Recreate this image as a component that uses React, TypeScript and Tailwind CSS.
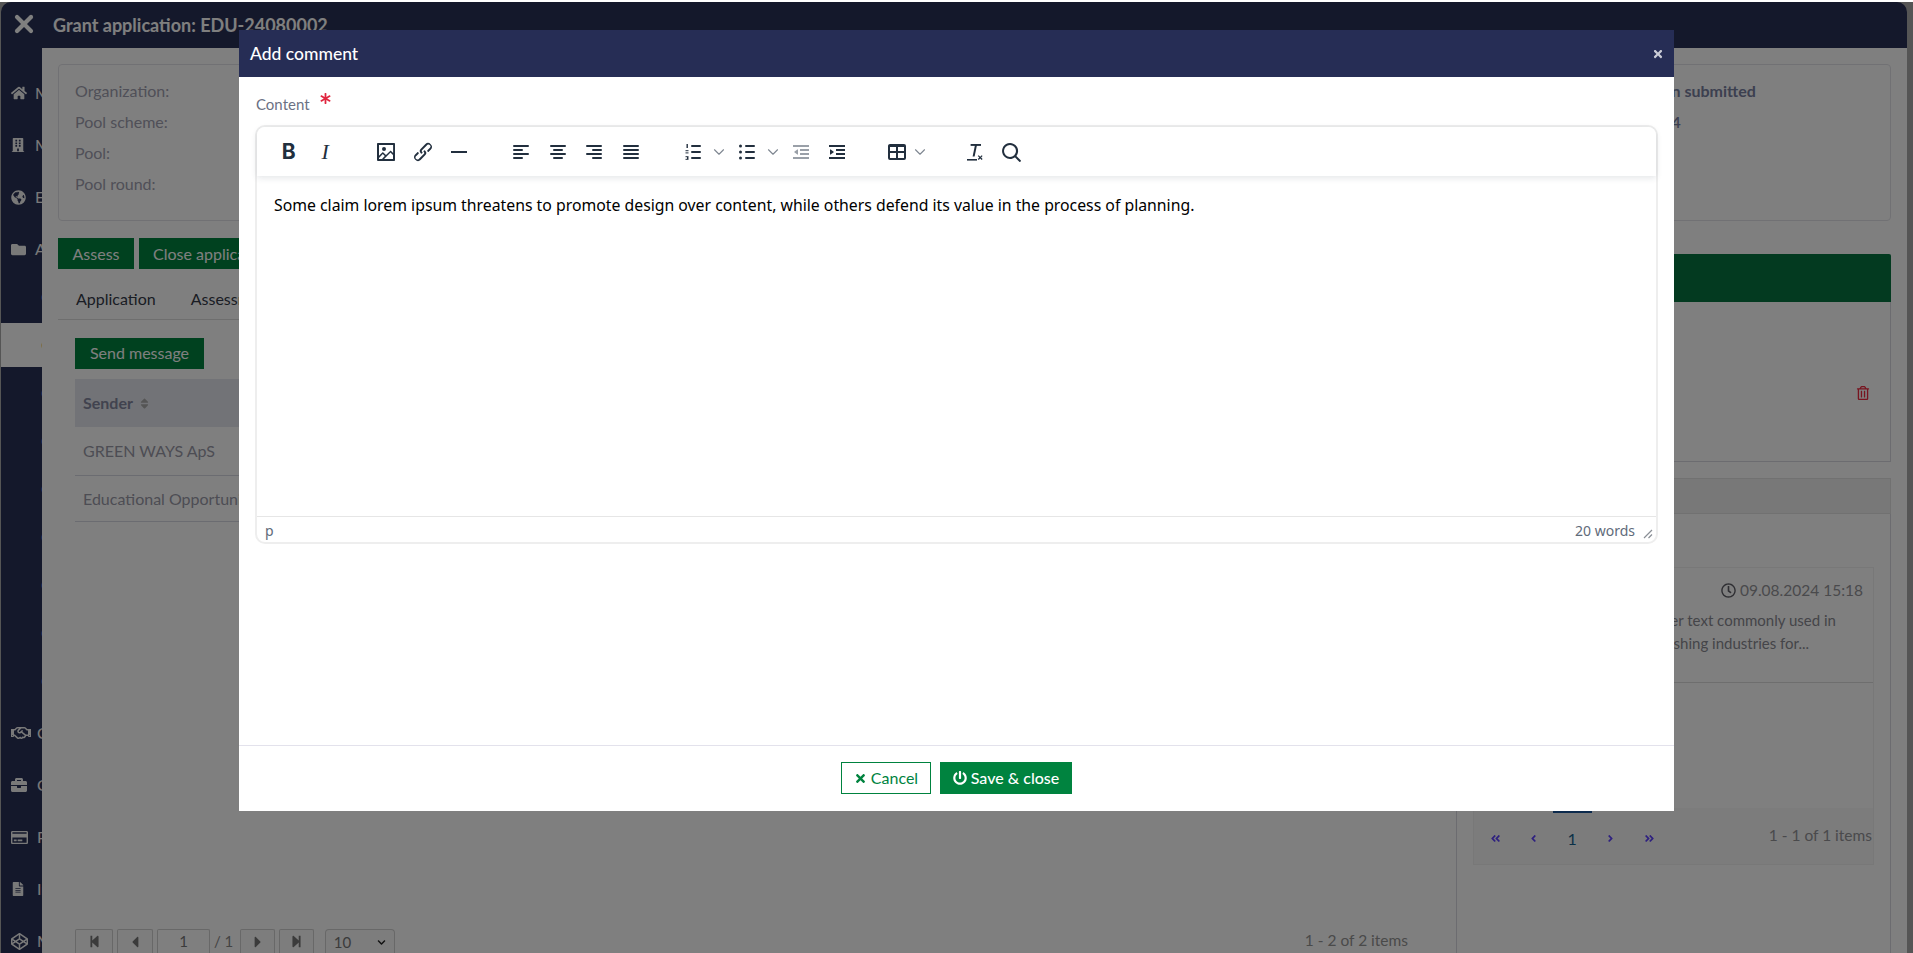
import type { ReactNode } from 'react';
import { ChevronDown, X } from 'lucide-react';
import {
  FaAngleDoubleLeft,
  FaAngleDoubleRight,
  FaAngleLeft,
  FaAngleRight,
  FaAsterisk,
  FaBriefcase,
  FaBuilding,
  FaChevronDown,
  FaCodepen,
  FaFileAlt,
  FaFolder,
  FaGlobeAmericas,
  FaHome,
  FaPowerOff,
  FaRegClock,
  FaRegCreditCard,
  FaRegHandshake,
  FaRegTrashAlt,
  FaSort,
  FaStepBackward,
  FaStepForward,
  FaTimes,
  FaCaretLeft,
  FaCaretRight,
} from 'react-icons/fa';

const font = "font-['Lato','Open_Sans',sans-serif]";

const topItems = [
  { icon: <FaHome size={16} />, label: 'My page' },
  { icon: <FaBuilding size={14} />, label: 'My organization' },
  { icon: <FaGlobeAmericas size={15} />, label: 'Explore' },
  { icon: <FaFolder size={15} />, label: 'Applications' },
];

const subItems = ['Calls', 'Grant applications', 'Contracts', 'Cases', 'Claims', 'Certificates', 'Changes', 'Comments', 'Closures'];

const bottomItems = [
  { icon: <FaRegHandshake size={20} />, label: 'Contacts' },
  { icon: <FaBriefcase size={16} />, label: 'Organizations' },
  { icon: <FaRegCreditCard size={17} />, label: 'Payments' },
  { icon: <FaFileAlt size={14} />, label: 'Invoices' },
  { icon: <FaCodepen size={17} />, label: 'Modules' },
];

function Sidebar() {
  return (
    <aside className="w-[41px] shrink-0 overflow-hidden pt-[19px]">
      {topItems.map((item) => (
        <div key={item.label} className="flex h-[52px] items-center whitespace-nowrap pl-[10px] text-[16px] text-[#f2f2f2]">
          <span className="w-[24px] shrink-0">{item.icon}</span>
          {item.label}
        </div>
      ))}
      <div className="-mt-[2px]">
        {subItems.map((label) => (
          <div key={label} className="h-[48px] py-[2px]">
            <div
              className={`flex h-[44px] items-center whitespace-nowrap pl-[40px] text-[16px] ${
                label === 'Grant applications' ? 'bg-white text-[#d08a5a]' : 'text-[#7d9ed8]'
              }`}
            >
              {label}
            </div>
          </div>
        ))}
      </div>
      <div className="mt-[2px]">
        {bottomItems.map((item) => (
          <div key={item.label} className="flex h-[52px] items-center whitespace-nowrap pl-[10px] text-[16px] text-[#f2f2f2]">
            <span className="w-[26px] shrink-0">{item.icon}</span>
            {item.label}
          </div>
        ))}
      </div>
    </aside>
  );
}

function GreenButton({ children, className = '' }: { children: ReactNode; className?: string }) {
  return <button className={`h-[31px] whitespace-nowrap bg-[#00833f] text-[16px] text-white ${className}`}>{children}</button>;
}

function PagerButton({ children, className = '' }: { children: ReactNode; className?: string }) {
  return (
    <span className={`flex h-[24px] items-center justify-center rounded-t-[2px] border border-b-0 border-[#d0d0d0] bg-[#fafafa] text-[#777] ${className}`}>
      {children}
    </span>
  );
}

function ApplicationColumn() {
  return (
    <div className="flex min-w-0 flex-1 flex-col">
      <div className="mt-[17px] flex gap-[5px]">
        <GreenButton className="w-[76px]">Assess</GreenButton>
        <GreenButton className="px-[14px]">Close application</GreenButton>
      </div>
      <div className="mt-[15px] flex h-[36px] items-start gap-[35px] border-b border-[#ddd] pl-[18px] text-[16px] text-[#353a48]">
        <span className="pt-[3px]">Application</span>
        <span className="pt-[3px]">Assessment</span>
      </div>
      <div className="flex flex-1 flex-col pl-[17px]">
        <GreenButton className="mt-[18px] w-[129px] pb-[2px]">Send message</GreenButton>
        <div className="mt-[10px] flex h-[48px] items-center gap-[5px] bg-[#e5e7ee] pl-[8px] text-[16px] font-bold text-[#82869e]">
          Sender <FaSort size={13} className="text-[#aaa]" />
        </div>
        <div className="flex h-[49px] items-center border-b border-[#d6d9e2] pl-[8px] text-[16px] text-[#9a9aa8]">GREEN WAYS ApS</div>
        <div className="flex h-[46px] items-center border-b border-[#d6d9e2] pl-[8px] text-[16px] text-[#9a9aa8]">Educational Opportunities Ltd</div>
        <div className="mt-auto flex items-end justify-between pr-[32px]">
          <div className="flex items-end gap-[4px]">
            <PagerButton className="w-[38px]"><FaStepBackward size={13} /></PagerButton>
            <PagerButton className="w-[36px]"><FaCaretLeft size={18} /></PagerButton>
            <PagerButton className="w-[53px] bg-white text-[15px]">1</PagerButton>
            <span className="flex h-[24px] w-[22px] items-center text-[15px] text-[#888]">/ 1</span>
            <PagerButton className="w-[35px]"><FaCaretRight size={18} /></PagerButton>
            <PagerButton className="w-[35px]"><FaStepForward size={13} /></PagerButton>
            <PagerButton className="ml-[7px] w-[70px] gap-[26px] rounded-t-[4px] pt-[2px] text-[15px]">
              10 <FaChevronDown size={9} className="text-[#222]" />
            </PagerButton>
          </div>
          <span className="h-[24px] text-[15.5px] text-[#949494]">1 - 2 of 2 items</span>
        </div>
      </div>
    </div>
  );
}

function PageLink({ children, active }: { children: ReactNode; active?: boolean }) {
  return (
    <span
      className={`flex h-[56px] w-[38.5px] items-center justify-center border-t-[5px] ${
        active ? 'border-[#18549a] text-[16px] text-[#14618f]' : 'border-transparent text-[#5c40ff]'
      }`}
    >
      {children}
    </span>
  );
}

function SidePanel() {
  return (
    <div className="flex w-[435px] shrink-0 flex-col">
      <div className="mt-[33px] h-[208px] rounded-t-[2px] border-x border-b border-[#d8d8e0]">
        <div className="-mx-px h-[48px] rounded-t-[2px] bg-[#067540]" />
        <div className="flex justify-end pr-[20px] pt-[84px] text-[#f0283f]">
          <FaRegTrashAlt size={14} />
        </div>
      </div>
      <div className="mt-[16px] flex flex-1 flex-col border-x border-[#d8d8e0]">
        <div className="-mx-px h-[36px] border border-[#e2e2e2] bg-[#f0f0f0]" />
        <div className="mx-[16px] mt-[53px] flex flex-col border border-[#f0f0f0]">
          <div className="h-[115px] border-b border-[#ddd] pl-[20px] pr-[10px]">
            <div className="mt-[11px] flex items-center justify-end gap-[4px] text-[15.5px] text-[#949499]">
              <FaRegClock size={15} className="text-[#5e5e66]" /> 09.08.2024 15:18
            </div>
            <p className="mt-[7px] whitespace-nowrap text-[15px] leading-[23px] text-[#8a8a92]">
              Lorem ipsum is a placeholder text commonly used in
              <br />
              the graphic, print, and publishing industries for...
            </p>
          </div>
          <div className="h-[125px]" />
          <div className="flex h-[56px] items-center justify-between bg-[#f8f8f8] pl-[2px] text-[15.5px] text-[#949499]">
            <div className="flex items-center">
              <PageLink><FaAngleDoubleLeft size={11} /></PageLink>
              <PageLink><FaAngleLeft size={11} /></PageLink>
              <PageLink active>1</PageLink>
              <PageLink><FaAngleRight size={11} /></PageLink>
              <PageLink><FaAngleDoubleRight size={11} /></PageLink>
            </div>
            <span className="whitespace-nowrap pr-px">1 - 1 of 1 items</span>
          </div>
        </div>
      </div>
    </div>
  );
}

function IconSvg({ children, size = 24 }: { children: ReactNode; size?: number }) {
  return (
    <svg width={size} height={size} viewBox="0 0 24 24" fill="currentColor">
      {children}
    </svg>
  );
}

function Lines({ rows }: { rows: [number, number][] }) {
  return (
    <>
      {rows.map(([x, w], i) => (
        <rect key={i} x={x} y={5 + i * 4} width={w} height="2" rx="1" />
      ))}
    </>
  );
}

const icons = {
  image: (
    <IconSvg>
      <path d="M5 15.7l3.3-3.2c.3-.3.7-.3 1 0L12 15l4.1-4c.3-.4.8-.4 1 0l2 1.9V5H5v10.7zM5 18V19h3l2.8-2.9-2-2L5 17.9zm14-3l-2.5-2.4-6.4 6.5H19v-4zM4 3h16c.6 0 1 .4 1 1v16c0 .6-.4 1-1 1H4a1 1 0 0 1-1-1V4c0-.6.4-1 1-1zm6 8a2 2 0 1 0 0-4 2 2 0 0 0 0 4z" />
    </IconSvg>
  ),
  link: (
    <IconSvg>
      <path d="M6.2 12.3a1 1 0 0 1 1.4 1.4l-2 2a2 2 0 1 0 2.6 2.8l4.8-4.8a1 1 0 0 0 0-1.4 1 1 0 1 1 1.4-1.3 2.9 2.9 0 0 1 0 4L9.6 20a3.9 3.9 0 0 1-5.5-5.5l2-2zm11.6-.6a1 1 0 0 1-1.4-1.4l2-2a2 2 0 1 0-2.6-2.8L11 10.3a1 1 0 0 0 0 1.4A1 1 0 1 1 9.6 13a2.9 2.9 0 0 1 0-4L14.4 4a3.9 3.9 0 0 1 5.5 5.5l-2 2z" />
    </IconSvg>
  ),
  hr: (
    <IconSvg>
      <rect x="4" y="11" width="16" height="2" />
    </IconSvg>
  ),
  left: <IconSvg><Lines rows={[[4, 16], [4, 10], [4, 16], [4, 10]]} /></IconSvg>,
  center: <IconSvg><Lines rows={[[4, 16], [7, 10], [4, 16], [7, 10]]} /></IconSvg>,
  right: <IconSvg><Lines rows={[[4, 16], [10, 10], [4, 16], [10, 10]]} /></IconSvg>,
  justify: <IconSvg><Lines rows={[[4, 16], [4, 16], [4, 16], [4, 16]]} /></IconSvg>,
  numlist: (
    <IconSvg>
      <rect x="10" y="5" width="10" height="2" rx="1" />
      <rect x="10" y="11" width="10" height="2" rx="1" />
      <rect x="10" y="17" width="10" height="2" rx="1" />
      <rect x="5.5" y="4" width="1.4" height="4" />
      <rect x="4.5" y="10.2" width="3" height="1" />
      <rect x="4.5" y="12.4" width="3" height="1" />
      <rect x="4.5" y="16.2" width="3" height="1" />
      <rect x="4.5" y="18.8" width="3" height="1" />
      <rect x="6" y="17" width="1.4" height="2" />
    </IconSvg>
  ),
  bullist: (
    <IconSvg>
      <rect x="10" y="5" width="10" height="2" rx="1" />
      <rect x="10" y="11" width="10" height="2" rx="1" />
      <rect x="10" y="17" width="10" height="2" rx="1" />
      <circle cx="5.5" cy="6" r="1.5" />
      <circle cx="5.5" cy="12" r="1.5" />
      <circle cx="5.5" cy="18" r="1.5" />
    </IconSvg>
  ),
  outdent: (
    <IconSvg>
      <rect x="4" y="5" width="16" height="2" />
      <rect x="11" y="9" width="9" height="2" />
      <rect x="11" y="13" width="9" height="2" />
      <rect x="4" y="17" width="16" height="2" />
      <path d="M9 9.2v5.6l-1-.6L5 12l3-2.2z" />
    </IconSvg>
  ),
  indent: (
    <IconSvg>
      <rect x="4" y="5" width="16" height="2" />
      <rect x="11" y="9" width="9" height="2" />
      <rect x="11" y="13" width="9" height="2" />
      <rect x="4" y="17" width="16" height="2" />
      <path d="M5 9.2v5.6l1-.6 3-2.2-3-2.2z" />
    </IconSvg>
  ),
  table: (
    <IconSvg>
      <path d="M5 4h14a2 2 0 0 1 2 2v12a2 2 0 0 1-2 2H5a2 2 0 0 1-2-2V6c0-1.1.9-2 2-2zm0 3v4h6V7H5zm8 0v4h6V7h-6zm-8 6v5h6v-5H5zm8 0v5h6v-5h-6z" />
    </IconSvg>
  ),
  clear: (
    <IconSvg>
      <rect x="7.6" y="4" width="10.4" height="1.9" />
      <path d="M12 5h2l-2.4 11.5h-2z" />
      <rect x="4" y="19" width="10" height="1.6" />
      <path d="M15.7 15.2l1.5 1.5 1.5-1.5.9.9-1.5 1.5 1.5 1.5-.9.9-1.5-1.5-1.5 1.5-.9-.9 1.5-1.5-1.5-1.5z" />
    </IconSvg>
  ),
  search: (
    <IconSvg>
      <path d="M16 17.3a8 8 0 1 1 1.4-1.4l4.3 4.4a1 1 0 0 1-1.4 1.4l-4.4-4.4zM11 17a6 6 0 1 0 0-12 6 6 0 0 0 0 12z" />
    </IconSvg>
  ),
};

function Tool({ children, muted }: { children: ReactNode; muted?: boolean }) {
  return <span className={`flex h-[34px] w-[36.5px] items-center justify-center ${muted ? 'text-[#9aa0a8]' : 'text-[#222f3e]'}`}>{children}</span>;
}

function Chevron() {
  return <ChevronDown size={18} strokeWidth={1.5} className="text-[#7f8791]" />;
}

function Toolbar() {
  return (
    <div className="relative flex h-[49px] shrink-0 items-center rounded-t-[8px] bg-white pl-[13.5px] shadow-[0_2px_6px_rgba(34,47,62,0.12)]">
      <Tool><span className="font-['Inter',sans-serif] text-[21px] font-bold leading-none">B</span></Tool>
      <Tool><span className="font-['Liberation_Serif',serif] text-[22px] italic leading-none">I</span></Tool>
      <span className="w-[24.5px]" />
      <Tool>{icons.image}</Tool>
      <Tool>{icons.link}</Tool>
      <Tool>{icons.hr}</Tool>
      <span className="w-[25.5px]" />
      <Tool>{icons.left}</Tool>
      <Tool>{icons.center}</Tool>
      <Tool>{icons.right}</Tool>
      <Tool>{icons.justify}</Tool>
      <span className="w-[25.5px]" />
      <Tool>{icons.numlist}</Tool>
      <span className="-ml-[1px] w-[18.5px]"><Chevron /></span>
      <Tool>{icons.bullist}</Tool>
      <span className="-ml-[1px] w-[18.5px]"><Chevron /></span>
      <Tool muted>{icons.outdent}</Tool>
      <Tool>{icons.indent}</Tool>
      <span className="w-[23.5px]" />
      <Tool>{icons.table}</Tool>
      <span className="-ml-[5px] w-[46px]"><Chevron /></span>
      <Tool>{icons.clear}</Tool>
      <Tool>{icons.search}</Tool>
    </div>
  );
}

function CommentModal() {
  return (
    <div className={`absolute left-[239px] top-[28px] z-20 flex h-[781px] w-[1435px] flex-col bg-white ${font}`}>
      <header className="flex h-[47px] shrink-0 items-center justify-between bg-[#262d55] pl-[11px] pr-[10px] pt-px text-white">
        <span className="text-[17.5px] font-medium">Add comment</span>
        <FaTimes size={12} className="text-[#c9cbd6]" />
      </header>
      <div className="flex-1 px-[16px]">
        <label className="flex h-[48px] items-start pl-px pt-[17px] text-[15px] leading-[20px] text-[#6b7184]">
          Content
          <FaAsterisk size={11} className="ml-[10px] mt-[-1px] text-[#e0263f]" />
        </label>
        <div className="flex h-[419px] flex-col rounded-[10px] border-2 border-[#eeeeee]">
          <Toolbar />
          <div className="flex-1 pl-[17px] pr-[16px] pt-[17px] font-['Noto_Sans','Open_Sans',sans-serif] text-[15.8px] leading-[24px] text-black">
            Some claim lorem ipsum threatens to promote design over content, while others defend its value in the process of planning.
          </div>
          <div className="relative flex h-[26px] items-center justify-between border-t border-[#e6e6e6] pl-[8px] pr-[21px] pt-[2px] font-['Noto_Sans','Open_Sans',sans-serif] text-[14px] text-[#5f6b7a]">
            <span>p</span>
            <span>20 words</span>
            <svg width="10" height="10" viewBox="0 0 10 10" className="absolute bottom-[3px] right-[3px] text-[#8a8f96]" stroke="currentColor" strokeWidth="1.2">
              <path d="M1 9 9 1M5.5 9 9 5.5" />
            </svg>
          </div>
        </div>
      </div>
      <footer className="flex h-[66px] shrink-0 items-center justify-center gap-[9px] border-t border-[#e3e2ec] pb-[1px]">
        <button className="flex h-[32px] w-[90px] items-center justify-center gap-[4px] border border-[#00833f] text-[16px] text-[#00833f]">
          <FaTimes size={13} /> Cancel
        </button>
        <button className="flex h-[32px] w-[132px] items-center justify-center gap-[4px] bg-[#00833f] text-[16px] font-medium text-white">
          <FaPowerOff size={14} /> Save &amp; close
        </button>
      </footer>
    </div>
  );
}

export default function App() {
  return (
    <div className={`relative h-[953px] w-[1913px] overflow-hidden border-t-2 border-white bg-[#aaaaaa] pl-px pr-[6px] ${font}`}>
      <div className="flex h-full flex-col overflow-hidden rounded-t-[10px] bg-[#283056]">
        <div className="flex h-[46px] shrink-0 items-center pl-[9px] text-white">
          <X size={28} strokeWidth={3.6} className="-mt-[2px]" />
          <h1 className="ml-[15px] text-[18px] font-bold">Grant application: EDU-24080002</h1>
        </div>
        <div className="flex min-h-0 flex-1">
          <Sidebar />
          <main className="flex min-w-0 flex-1 flex-col bg-white px-[16px] pt-[16px]">
            <section className="flex h-[157px] shrink-0 justify-between rounded-[4px] border border-[#e2e2e8] pl-[16px] pt-[15px] text-[16px] text-[#a0a0b0]">
              <div className="space-y-[10px] leading-[21px]">
                <p>Organization:</p>
                <p>Pool scheme:</p>
                <p>Pool:</p>
                <p>Pool round:</p>
              </div>
              <div className="w-[291px] space-y-[10px] leading-[21px]">
                <p className="font-bold text-[#78809f]">Application submitted</p>
                <p className="font-semibold text-[#78809f]">09.08.2024</p>
              </div>
            </section>
            <div className="flex min-h-0 flex-1 gap-[16px]">
              <ApplicationColumn />
              <SidePanel />
            </div>
          </main>
        </div>
      </div>
      <div className="absolute inset-0 bg-black/50" />
      <CommentModal />
    </div>
  );
}
